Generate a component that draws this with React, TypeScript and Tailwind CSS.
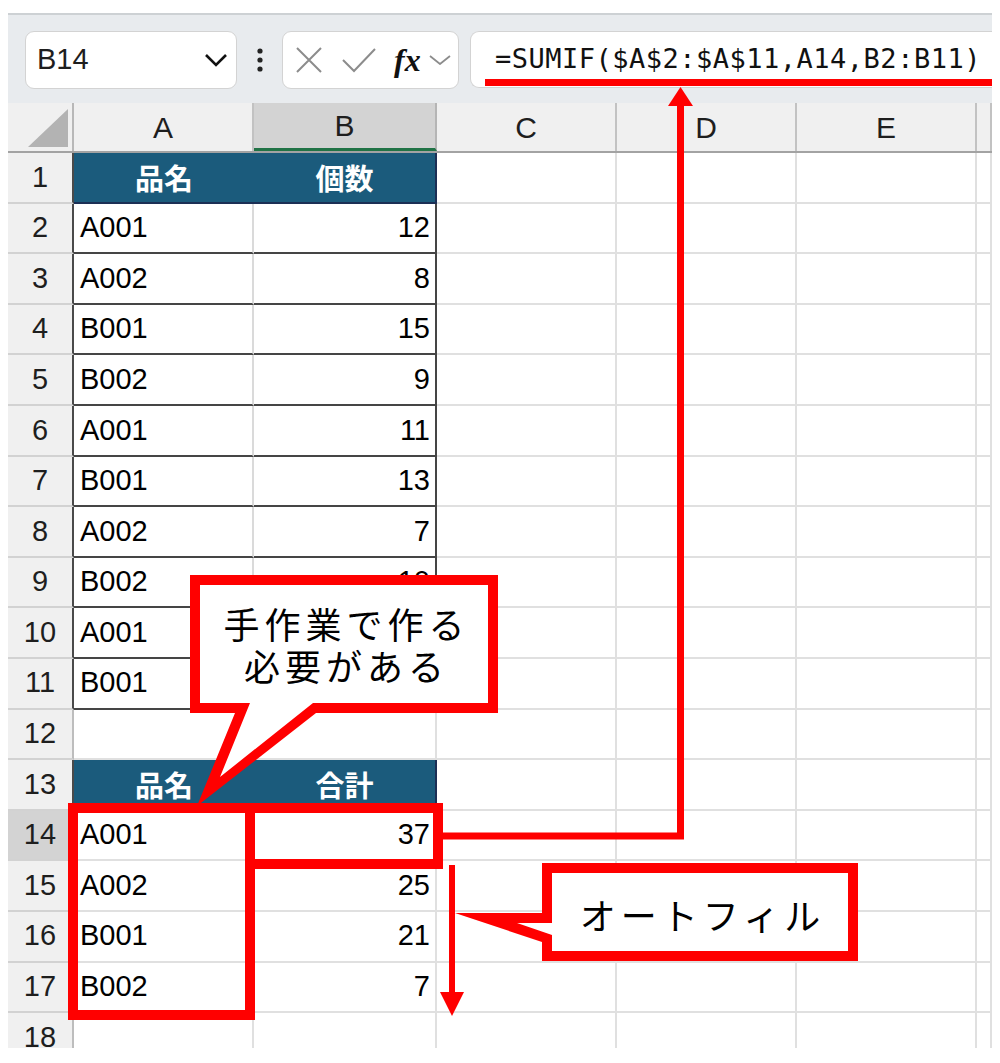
import React from 'react';

const colW = ['w-[180px]', 'w-[183px]', 'w-[180px]', 'w-[180px]', 'w-[180px]', 'w-[15px]'];
const colNames = ['A', 'B', 'C', 'D', 'E', ''];

// rows 2-11; B10 and B11 sit fully under the callout, so they stay blank
const table1: [string, number | ''][] = [
    ['A001', 12], ['A002', 8], ['B001', 15], ['B002', 9], ['A001', 11],
    ['B001', 13], ['A002', 7], ['B002', 10], ['A001', ''], ['B001', ''],
];
const table2: [string, number][] = [['A001', 37], ['A002', 25], ['B001', 21], ['B002', 7]];

const headerTitles: Record<number, [string, string]> = { 1: ['品名', '個数'], 13: ['品名', '合計'] };

const Cell: React.FC<{ r: number; c: number }> = ({ r, c }) => {
    const base = `${colW[c]} h-full shrink-0 flex items-center text-[29px] text-black`;
    const head = headerTitles[r];
    if (head && c < 2) {
        return (
            <div className={`${base} justify-center bg-[#1b5b7c] border-b-2 border-[#1c2f55] ${c === 1 ? 'border-r-2' : ''}`}>
                <span className="font-['Noto_Sans_CJK_JP',sans-serif] font-bold text-white text-[29px]">{head[c]}</span>
            </div>
        );
    }
    let text: string | number = '';
    if (r >= 2 && r <= 11 && c < 2) text = table1[r - 2][c];
    if (r >= 14 && r <= 17 && c < 2) text = table2[r - 14][c];
    const inTable1 = r >= 2 && r <= 11 && c < 2;
    let borders = 'border-r-2 border-b-2 border-[#e0e0e0]';
    if (inTable1) {
        borders = c === 0
            ? 'border-b-2 border-b-[#454545] border-r-2 border-r-[#dadada]'
            : 'border-b-2 border-r-2 border-[#454545]';
    }
    return (
        <div className={`${base} bg-white ${borders} ${c === 1 ? 'justify-end pr-[5px]' : 'pl-[6px]'}`}>
            {text}
        </div>
    );
};

const App: React.FC = () => {
    const rows = Array.from({ length: 18 }, (_, i) => i + 1);
    return (
        <div className="relative w-[1000px] h-[1063px] bg-white overflow-hidden font-['Liberation_Sans','Noto_Sans_CJK_JP',sans-serif]">
            <div className="ml-[8px] mt-[13px] w-[984px]">
                {/* formula bar */}
                <div className="h-[90px] bg-[#e8ebee] border-t-2 border-[#cdd1d4] flex items-start pt-[16px] pl-[17px]">
                    <div className="w-[212px] h-[58px] bg-white rounded-[9px] border border-[#d3d3d3] flex items-center justify-between pl-[11px] pr-[8px]">
                        <span className="text-[29px] text-[#1e1e1e]">B14</span>
                        <svg width="24" height="14" viewBox="0 0 24 14">
                            <polyline points="2,2 12,12 22,2" fill="none" stroke="#111" strokeWidth="2.6" />
                        </svg>
                    </div>
                    <div className="w-[45px] h-[58px] flex items-center justify-center">
                        <svg width="8" height="24" viewBox="0 0 8 24">
                            <circle cx="4" cy="3" r="2.6" fill="#222" />
                            <circle cx="4" cy="12" r="2.6" fill="#222" />
                            <circle cx="4" cy="21" r="2.6" fill="#222" />
                        </svg>
                    </div>
                    <div className="w-[177px] h-[58px] bg-white rounded-[9px] border border-[#d3d3d3] flex items-center pl-[13px] gap-[20px]">
                        <svg width="26" height="26" viewBox="0 0 26 26">
                            <path d="M1 1 L25 25 M25 1 L1 25" stroke="#8c8c8c" strokeWidth="2" />
                        </svg>
                        <svg width="34" height="26" viewBox="0 0 34 26">
                            <path d="M1 13 L12 24 L33 2" fill="none" stroke="#8c8c8c" strokeWidth="2" />
                        </svg>
                        <div className="flex items-center gap-[8px] -ml-[2px]">
                            <span className="font-['Liberation_Serif',serif] italic font-bold text-[32px] text-[#111] leading-none">fx</span>
                            <svg width="22" height="10" viewBox="0 0 22 10">
                                <polyline points="1,1 11,9 21,1" fill="none" stroke="#8c8c8c" strokeWidth="1.8" />
                            </svg>
                        </div>
                    </div>
                    <div className="ml-[11px] flex-1 h-[57px] bg-white rounded-l-[9px] border border-r-0 border-[#d3d3d3] flex items-center pl-[24px]">
                        <span className="font-['DejaVu_Sans_Mono',monospace] text-[27px] tracking-[0.5px] text-[#111] whitespace-nowrap">=SUMIF($A$2:$A$11,A14,B2:B11)</span>
                    </div>
                </div>

                {/* sheet */}
                <div className="h-[945px] overflow-hidden">
                    <div className="flex h-[50px] border-b-2 border-[#a3a3a3]">
                        <div className="w-[66px] shrink-0 h-full bg-[#f0f0f0] border-r-2 border-[#b8b8b8] flex items-end justify-end pr-[4px] pb-[4px]">
                            <svg width="40" height="38" viewBox="0 0 40 38">
                                <polygon points="40,0 40,38 0,38" fill="#b3b3b3" />
                            </svg>
                        </div>
                        {colNames.map((n, c) => (
                            <div
                                key={c}
                                className={`${colW[c]} shrink-0 h-full flex items-center justify-center text-[30px] text-[#1e1e1e] border-r-2 ${c === 1 ? 'bg-[#d3d3d3] border-b-[3px] border-b-[#217346] border-r-[#b5b5b5]' : 'bg-[#f0f0f0] border-[#c2c2c2]'}`}
                            >
                                {n}
                            </div>
                        ))}
                    </div>
                    {rows.map(r => {
                        const darkEdge = (r >= 1 && r <= 11) || r === 13;
                        return (
                            <div key={r} className="flex h-[50.6px]">
                                <div
                                    className={`w-[66px] shrink-0 h-full flex items-center justify-center text-[29px] text-[#1e1e1e] border-b-2 border-b-[#d2d2d2] border-r-2 ${darkEdge ? 'border-r-[#4a4a4a]' : 'border-r-[#bdbdbd]'} ${r === 14 ? 'bg-[#d3d3d3]' : 'bg-[#f0f0f0]'}`}
                                >
                                    {r}
                                </div>
                                {colNames.map((_, c) => <Cell key={c} r={r} c={c} />)}
                            </div>
                        );
                    })}
                </div>
            </div>

            {/* annotations */}
            <svg className="absolute left-0 top-0 pointer-events-none" width="1000" height="1063" viewBox="0 0 1000 1063">
                <rect x="485" y="79" width="507" height="7" fill="#ff0000" />
                <path d="M443 836 H680.5 V104" fill="none" stroke="#ff0000" strokeWidth="7" />
                <polygon points="668,106 693,106 680.5,87" fill="#ff0000" />

                <rect x="73" y="808" width="177" height="207" fill="none" stroke="#ff0000" strokeWidth="10" />
                <rect x="250" y="808" width="188" height="56" fill="none" stroke="#ff0000" strokeWidth="10" />

                <line x1="452" y1="865" x2="452" y2="994" stroke="#ff0000" strokeWidth="6" />
                <polygon points="440,992 464,992 452,1016" fill="#ff0000" />

                <polygon points="190,575 498,575 498,713 316,713 197,806 235,713 190,713" fill="#ff0000" />
                <polygon points="200,585 488,585 488,703 313,703 220,777 250,703 200,703" fill="#ffffff" />

                <polygon points="542,863 858,863 858,961 542,961 542,942 455,913 542,913" fill="#ff0000" />
                <polygon points="552,873 848,873 848,951 552,951 552,935 517,923 552,923" fill="#ffffff" />
            </svg>

            <div className="absolute left-[200px] top-[585px] w-[288px] h-[118px] flex flex-col items-center justify-center pl-[5px] font-['Noto_Sans_CJK_JP',sans-serif] text-[36px] leading-[42px] tracking-[5px] text-black">
                <span>手作業で作る</span>
                <span>必要がある</span>
            </div>
            <div className="absolute left-[552px] top-[873px] w-[296px] h-[78px] flex items-center justify-center pl-[5px] pt-[4px] font-['Noto_Sans_CJK_JP',sans-serif] text-[36px] tracking-[5px] text-black">
                オートフィル
            </div>
        </div>
    );
};

export default App;
